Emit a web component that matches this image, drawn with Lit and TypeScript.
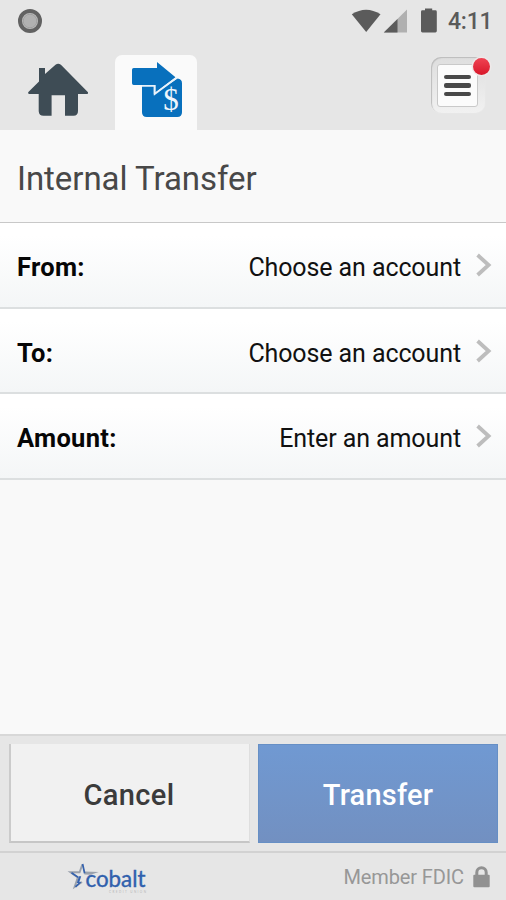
import { LitElement, html, css, svg } from "lit";
import { customElement, property } from "lit/decorators.js";

@customElement("field-row")
class FieldRow extends LitElement {
  @property() label = "";
  @property() value = "";

  static styles = css`
    :host {
      display: flex;
      align-items: center;
      box-sizing: border-box;
      padding: 4px 14px 0 17px;
      background: linear-gradient(#ffffff 15%, #f4f6f7);
      border-bottom: 2px solid #dcdfe0;
      color: #111;
      font-size: 25px;
      line-height: 30px;
    }
    .label { flex: 1; font-weight: 700; font-size: 25.5px; letter-spacing: 0.3px; color: #060606; }
    .value { padding-top: 2px; white-space: nowrap; letter-spacing: -0.1px; }
    .chevron { width: 16px; height: 24px; margin: -4px 0 0 15px; }
  `;

  render() {
    return html`
      <span class="label">${this.label}</span>
      <span class="value">${this.value}</span>
      <svg class="chevron" viewBox="0 0 16 24">
        <path d="M1.6 2L12.6 12 1.6 22" fill="none" stroke="#bdbdbd" stroke-width="3.8" />
      </svg>
    `;
  }
}

@customElement("app-root")
class AppRoot extends LitElement {
  static styles = css`
    :host {
      display: flex;
      flex-direction: column;
      width: 506px;
      height: 900px;
      overflow: hidden;
      background: #f9f9f9;
      font-family: Roboto, "Liberation Sans", sans-serif;
    }
    svg { display: block; flex: none; }
    .status {
      display: flex;
      align-items: center;
      height: 41px;
      box-sizing: border-box;
      padding: 0 14px 0 17px;
      background: #e6e6e6;
    }
    .icons { flex: 1; display: flex; justify-content: flex-end; }
    .clock { width: 44px; margin-left: 10px; font-size: 23px; font-weight: 500; line-height: 41px; color: #5a5a5a; white-space: nowrap; letter-spacing: -0.2px; padding-top: 1px; }
    .nav {
      display: flex;
      align-items: flex-end;
      height: 89px;
      background: #e6e6e6;
    }
    .home { margin: 0 27px 13px 28px; }
    .tab {
      width: 82px;
      height: 75px;
      border-radius: 7px 7px 0 0;
      background: #fafafa;
    }
    .tab svg { margin: 7px 0 0 15px; }
    .menu {
      position: relative;
      width: 54px;
      height: 56px;
      box-sizing: border-box;
      margin: 0 21px 17px auto;
      padding: 7px 7px 6px 6px;
      border-radius: 10px;
      background: linear-gradient(#dedede, #f1f1f1);
      box-shadow: inset 1px 1px 1px #bcbcbc, 0 0 1px #f4f4f4;
    }
    .panel {
      display: flex;
      flex-direction: column;
      align-items: center;
      justify-content: center;
      gap: 4px;
      height: 43px;
      box-sizing: border-box;
      border: 1px solid #c9c9c9;
      border-radius: 3px;
      background: #fbfbfb;
    }
    .bar { width: 27px; height: 4.5px; border-radius: 2px; background: #484848; }
    .badge {
      position: absolute;
      right: -5px;
      top: 1px;
      width: 17px;
      height: 17px;
      border-radius: 50%;
      background: linear-gradient(#f04353, #d81729);
      box-shadow: 0 0 0 1.5px #efe9e9;
    }
    h1 {
      height: 93px;
      box-sizing: border-box;
      margin: 0;
      padding-left: 17px;
      border-bottom: 1px solid #c8c8c8;
      font-size: 33px;
      font-weight: 400;
      line-height: 97px;
      letter-spacing: -0.05px;
      color: #484848;
    }
    .rows { display: grid; grid-template-rows: 86px 85px 86px; }
    .actions {
      display: grid;
      grid-template-columns: 241px 240px;
      gap: 8px;
      height: 117px;
      box-sizing: border-box;
      margin-top: auto;
      padding: 8px 8px 0 9px;
      border-top: 2px solid #d8d8d8;
      background: #e6e6e6;
    }
    button {
      height: 99px;
      box-sizing: border-box;
      border: 0;
      padding: 3px 0 0;
      font: 500 29px/34px Roboto, sans-serif;
      letter-spacing: 0.2px;
    }
    .cancel {
      background: #f1f1f1;
      color: #3b3b3b;
      border-left: 2px solid #cbcbcb;
      border-bottom: 2px solid #c6c6c6;
      border-right: 1px solid #dedede;
      padding: 5px 2px 0 0;
      letter-spacing: 0.4px;
    }
    .transfer {
      background: linear-gradient(#7099d2, #7290c1);
      color: #fff;
      border: 1px solid #668fc5;
    }
    .footer {
      display: flex;
      align-items: center;
      height: 49px;
      box-sizing: border-box;
      padding-right: 15px;
      border-top: 2px solid #d2d2d2;
      background: #e6e6e6;
      color: #979797;
      font-size: 20px;
      letter-spacing: -0.12px;
    }
    .logo { margin: 2px auto 0 67px; }
    .fdic { padding-top: 1px; margin-right: 8px; white-space: nowrap; }
    .word { font: 400 22.5px Lato, sans-serif; letter-spacing: 0; }
    .tag { font: 3px Lato, sans-serif; letter-spacing: 0; }
    .dollar { font: 400 31px "Liberation Serif", serif; }
  `;

  private bars = [0, 1, 2].map(() => html`<div class="bar"></div>`);

  private lock = svg`
    <path d="M4.8 11V7.4a4.7 4.7 0 0 1 9.4 0V11" fill="none" stroke="#919191" stroke-width="3" />
    <rect x="1.3" y="9.8" width="16.4" height="12.4" rx="1" fill="#919191" />`;

  render() {
    return html`
      <div class="status">
        <svg width="26" height="26" viewBox="0 0 26 26">
          <circle cx="13" cy="13" r="10" fill="#bcbcbc" stroke="#626262" stroke-width="4" />
          <circle cx="13" cy="13" r="6.8" fill="#b1b1b1" stroke="#a0a0a0" />
        </svg>
        <div class="icons">
          <svg width="87" height="28" viewBox="351 6 87 28">
            <path d="M351.8 13.3Q366 4.3 380.5 13.3L366.2 31Z" fill="#5b5b5b" />
            <path d="M383.8 31.5L407 8.5V31.5Z" fill="#b0b0b0" />
            <path d="M383.8 31.5L397.5 17.9V31.5Z" fill="#5b5b5b" />
            <path d="M425 7.5h7.2v1.8h3.2q1.4 0 1.4 1.4V30.1q0 1.4-1.4 1.4H422.4q-1.4 0-1.4-1.4V10.7q0-1.4 1.4-1.4H425Z" fill="#5b5b5b" />
          </svg>
        </div>
        <div class="clock">4:11</div>
      </div>
      <div class="nav">
        <svg class="home" width="60" height="54" viewBox="28 63 60 54">
          <path d="M39 68h6v6l10.5-9.3q2.7-1.8 5.4 0L88 92.2q.4 1.6-.8 1.8H78v17q0 4.8-4.5 4.8H65V95.3H51.6V115.8H43.5q-4.5 0-4.8-4.5V94H29q-1.4-.5-.6-2L39 81.5Z" fill="#3e4c55" />
        </svg>
        <div class="tab">
          <svg width="54" height="57" viewBox="130 62 54 57">
            <path d="M142 85.8H153.7V94.6L177.5 78.5Q182 79 182 83.2V112.2Q182 117 177.2 117H146.8Q142 117 142 112.2Z" fill="#0870bd" />
            <path d="M133.7 68H157V62L175.5 77.2 155.3 92.5V85H133.7Q132 85 132 83.2V69.8Q132 68 133.7 68Z" fill="#0870bd" />
            <path d="M142 85.8H154.7V94L177 77.5" fill="none" stroke="#e9f2fa" stroke-width="1.7" />
            <text class="dollar" x="163.3" y="110" fill="#eef6fc" textLength="15.5" lengthAdjust="spacingAndGlyphs">$</text>
          </svg>
        </div>
        <div class="menu">
          <div class="panel">${this.bars}</div>
          <div class="badge"></div>
        </div>
      </div>
      <h1>Internal Transfer</h1>
      <div class="rows">
        <field-row label="From:" value="Choose an account"></field-row>
        <field-row label="To:" value="Choose an account"></field-row>
        <field-row label="Amount:" value="Enter an amount"></field-row>
      </div>
      <div class="actions">
        <button class="cancel">Cancel</button>
        <button class="transfer">Transfer</button>
      </div>
      <div class="footer">
        <svg class="logo" width="82" height="34" viewBox="67 860 82 34">
          <path d="M82.5 862.5L84.8 870.4 98.8 871 90.5 873.8 84.4 873.4Z" fill="#9aa1ac" />
          <path d="M82.3 863.5L79.6 871.3H70.5L77.8 876.5 74.6 886 82 881" fill="none" stroke="#9aa1ac" stroke-width="1.9" />
          <path d="M82.6 863L84.6 872.2M71.5 871.8L78.3 876.4M80.6 881L75.5 885.8" fill="none" stroke="#3562ae" stroke-width="1.7" />
          <path d="M79 875.3H81.2L79 882H76.8Z" fill="#3562ae" />
          <text class="word" x="85.5" y="885.6" fill="#3060ad" stroke="#3060ad" stroke-width=".4" textLength="60" lengthAdjust="spacingAndGlyphs">cobalt</text>
          <text class="tag" x="109" y="892.3" fill="#b7b7b7" textLength="37">CREDIT UNION</text>
        </svg>
        <div class="fdic">Member FDIC</div>
        <svg width="19" height="24" viewBox="0 0 19 24">${this.lock}</svg>
      </div>
    `;
  }
}
